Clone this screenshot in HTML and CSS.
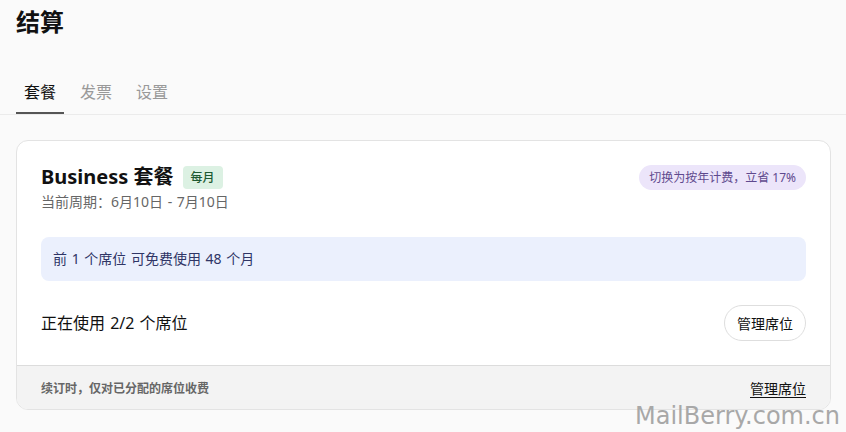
FILE: index.html
```html
<!DOCTYPE html>
<html lang="zh-CN">
<head>
<meta charset="utf-8">
<title>结算</title>
<link rel="stylesheet" href="styles.css">
</head>
<body>
<div class="page">
  <header class="header">
    <h1 class="title">结算</h1>
    <nav class="tabs">
      <a class="tab active">套餐</a>
      <a class="tab">发票</a>
      <a class="tab">设置</a>
    </nav>
  </header>
  <section class="card">
    <div class="card-body">
      <div class="plan-head">
        <div class="plan-info">
          <div class="plan-title-row">
            <h2 class="plan-title">Business 套餐</h2>
            <span class="badge">每月</span>
          </div>
          <div class="period">当前周期：6月10日 - 7月10日</div>
        </div>
        <span class="promo">切换为按年计费，立省 17%</span>
      </div>
      <div class="notice">前 1 个席位 可免费使用 48 个月</div>
      <div class="seats-row">
        <span class="seats">正在使用 2/2 个席位</span>
        <button class="btn">管理席位</button>
      </div>
    </div>
    <div class="card-foot">
      <span class="foot-note">续订时，仅对已分配的席位收费</span>
      <a class="foot-link">管理席位</a>
    </div>
  </section>
  <div class="watermark">MailBerry.com.cn</div>
</div>
</body>
</html>
```
FILE: styles.css
```css
* { box-sizing: border-box; }
html, body { margin: 0; padding: 0; }
body {
  background: #fafafa;
  font-family: "Noto Sans", "Noto Sans CJK SC", sans-serif;
  color: #111;
  width: 846px;
  height: 432px;
  overflow: hidden;
}
.page { position: relative; height: 432px; }
.header { padding: 0 0 0 16px; }
.title {
  margin: 0;
  padding-top: 6px;
  font-size: 24px;
  line-height: 32px;
  font-weight: 700;
  color: #111;
}
.tabs {
  display: flex;
  gap: 8px;
  margin-top: 42px;
  border-bottom: 1px solid #ebebeb;
  margin-left: -16px;
  padding-left: 16px;
}
.tab {
  padding: 0 8px 8px;
  font-size: 16px;
  line-height: 24px;
  color: #999;
  border-bottom: 2px solid transparent;
}
.tab.active { color: #111; border-bottom-color: #555; }
.card {
  margin: 25px 15px 0 16px;
  background: #fff;
  border: 1px solid #e3e3e3;
  border-radius: 12px;
  overflow: hidden;
}
.card-body { padding: 24px 24px 24px 24px; }
.plan-head { display: flex; justify-content: space-between; align-items: flex-start; }
.plan-title-row { display: flex; align-items: center; gap: 9px; }
.plan-title {
  margin: 0;
  font-size: 20px;
  line-height: 24px;
  font-weight: 700;
  color: #111;
}
.badge {
  background: #dcf1e3;
  color: #1d5a32;
  font-size: 12px;
  line-height: 23px;
  height: 23px;
  padding: 0 8px;
  border-radius: 4px;
  font-weight: 500;
}
.period {
  margin-top: 3px;
  font-size: 14px;
  line-height: 20px;
  color: #666;
  word-spacing: 1px;
}
.promo {
  background: #ece5fa;
  color: #5f4a8e;
  font-size: 12px;
  line-height: 25px;
  height: 25px;
  padding: 0 10px;
  border-radius: 13px;
}
.notice {
  margin-top: 25px;
  height: 44px;
  background: #ebf0fd;
  border-radius: 8px;
  padding: 0 12px;
  font-size: 14px;
  line-height: 44px;
  color: #2f3566;
  word-spacing: 1px;
}
.seats-row {
  margin-top: 24px;
  display: flex;
  justify-content: space-between;
  align-items: center;
}
.seats { font-size: 16px; line-height: 22px; color: #111; word-spacing: 1px; }
.btn {
  height: 36px;
  width: 82px;
  border: 1px solid #dedede;
  background: #fff;
  border-radius: 18px;
  font-family: inherit;
  font-size: 14px;
  color: #111;
  padding: 0;
}
.card-foot {
  border-top: 1px solid #dcdcdc;
  background: #f3f3f3;
  height: 44px;
  padding: 0 24px;
  display: flex;
  justify-content: space-between;
  align-items: center;
}
.foot-note { font-size: 12px; font-weight: 700; color: #666; }
.foot-link {
  font-size: 14px;
  color: #111;
  text-decoration: underline;
  text-underline-offset: 3px;
}
.watermark {
  position: absolute;
  right: 6px;
  bottom: 1px;
  font-family: "DejaVu Sans", sans-serif;
  font-size: 24px;
  line-height: 30px;
  color: #a8a8a8;
}
```
